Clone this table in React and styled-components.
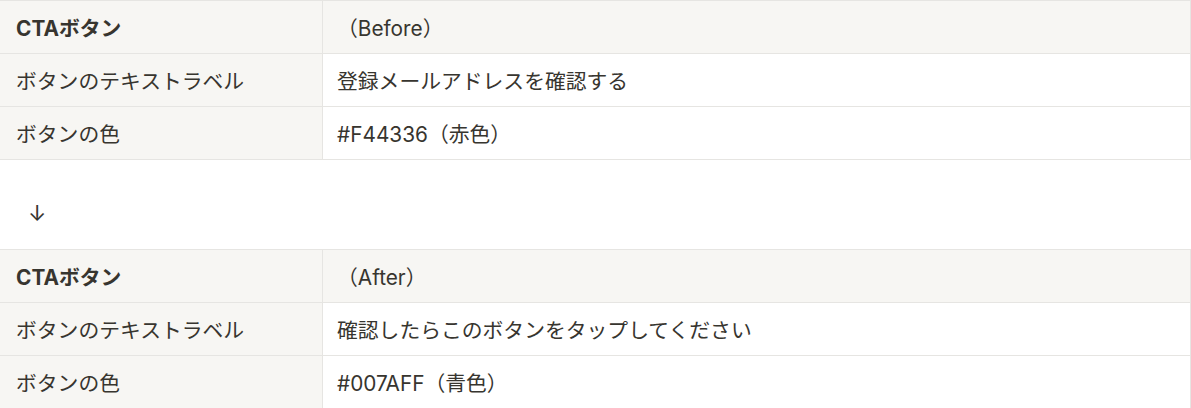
import React from "react";
import styled, { createGlobalStyle } from "styled-components";

const Global = createGlobalStyle`
  html, body { margin: 0; padding: 0; background: #ffffff; }
  body {
    font-family: "Inter", "Noto Sans CJK JP", sans-serif;
    color: #37352f;
    -webkit-font-smoothing: antialiased;
  }
`;

const Page = styled.div`
  display: flex;
  flex-direction: column;
  width: 1191px;
`;

const Table = styled.div`
  display: grid;
  grid-template-columns: 323px 1fr;
  border-top: 1px solid #e6e5e2;
`;

const Cell = styled.div`
  display: flex;
  align-items: center;
  height: 52px;
  padding: 0 14px 0 ${(p) => (p.$first ? "16px" : "14px")};
  border-right: 1px solid #e6e5e2;
  border-bottom: 1px solid #e6e5e2;
  background: ${(p) => (p.$shaded ? "#f7f6f3" : "#ffffff")};
  font-size: 20.8px;
  font-weight: ${(p) => (p.$bold ? 700 : 400)};
  white-space: nowrap;
`;

const Arrow = styled.div`
  display: flex;
  align-items: center;
  height: 89px;
  padding: 17px 0 0 28px;
  box-sizing: border-box;
  font-size: 22px;
  color: #37352f;
`;

function CtaTable({ rows }) {
  return (
    <Table>
      {rows.map((r, i) => (
        <React.Fragment key={i}>
          <Cell $first $shaded $bold={i === 0}>{r[0]}</Cell>
          <Cell $shaded={i === 0} $bold={false}>{r[1]}</Cell>
        </React.Fragment>
      ))}
    </Table>
  );
}

export default function App() {
  return (
    <Page>
      <Global />
      <CtaTable
        rows={[
          ["CTAボタン", "（Before）"],
          ["ボタンのテキストラベル", "登録メールアドレスを確認する"],
          ["ボタンの色", "#F44336（赤色）"],
        ]}
      />
      <Arrow>↓</Arrow>
      <CtaTable
        rows={[
          ["CTAボタン", "（After）"],
          ["ボタンのテキストラベル", "確認したらこのボタンをタップしてください"],
          ["ボタンの色", "#007AFF（青色）"],
        ]}
      />
    </Page>
  );
}
